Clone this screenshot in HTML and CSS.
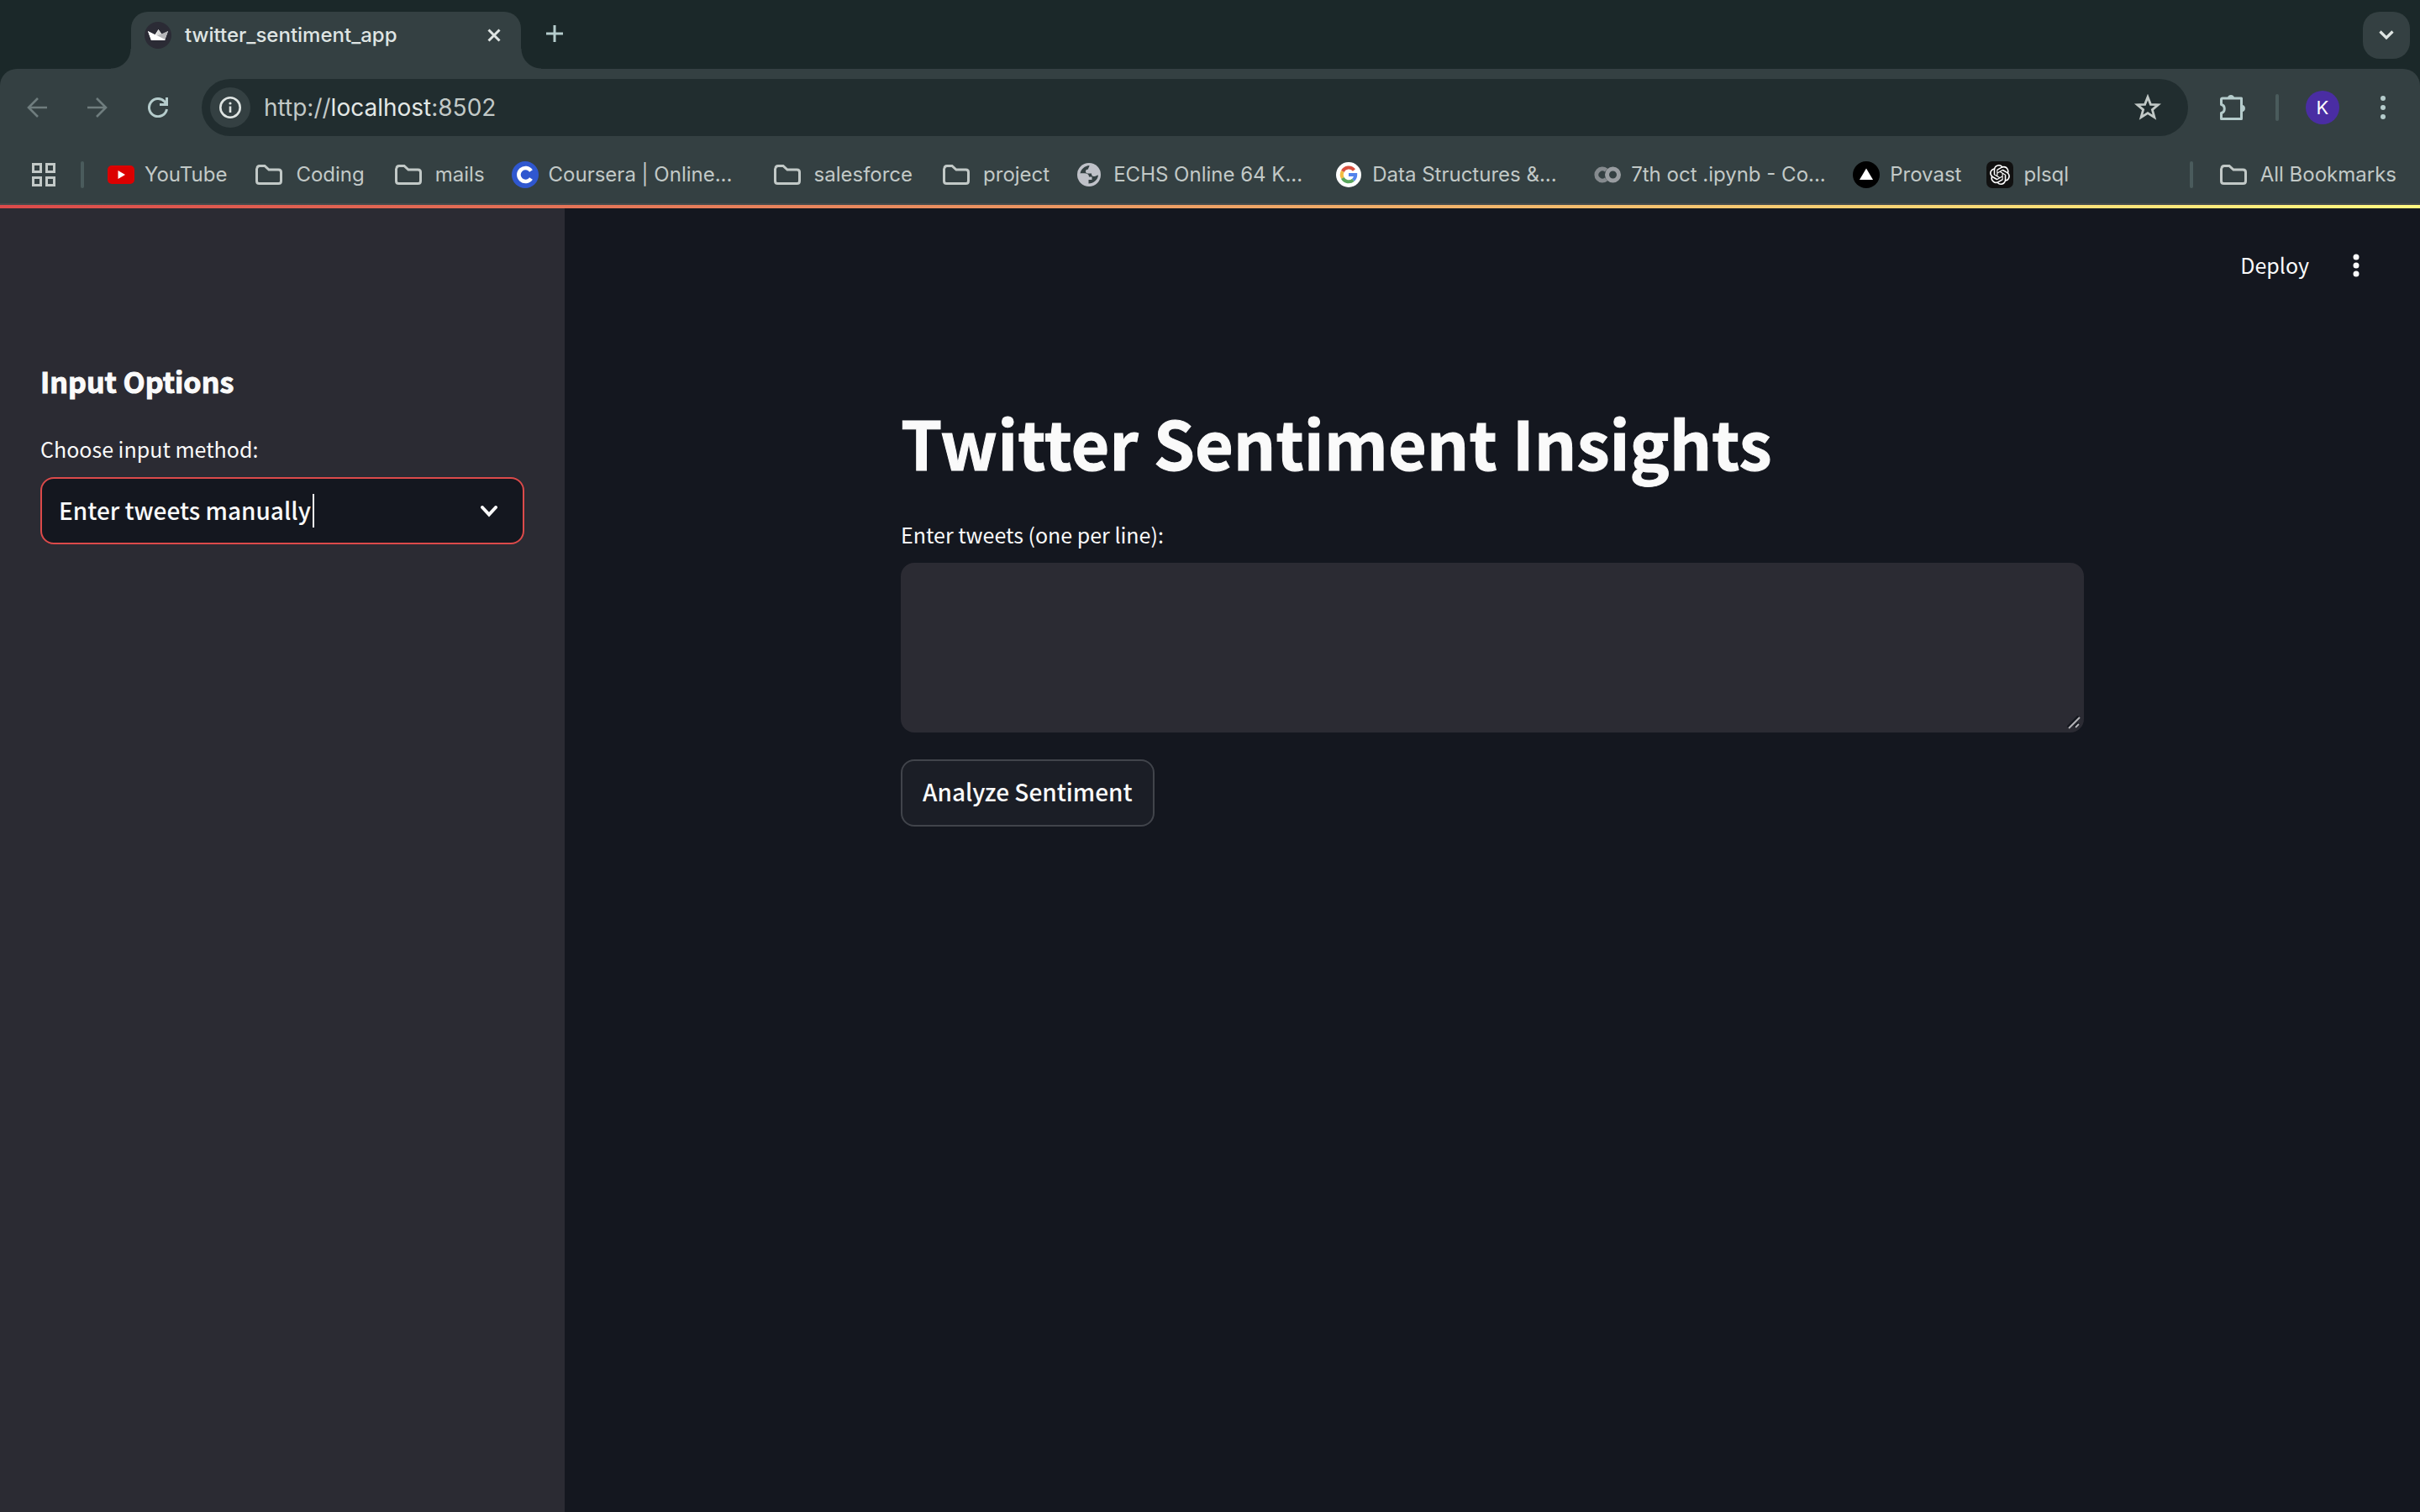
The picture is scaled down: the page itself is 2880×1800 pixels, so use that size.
FILE: index.html
```html
<!DOCTYPE html>
<html lang="en">
<head>
<meta charset="utf-8">
<title>twitter_sentiment_app</title>
<link rel="stylesheet" href="styles.css">
</head>
<body>
<svg class="defs" aria-hidden="true">
  <symbol id="folder" viewBox="0 0 32 24"><path d="M2 4.500Q2 1.500 5 1.500H11L16 6H27.500Q30.500 6 30.500 9V19.500Q30.500 22.500 27.500 22.500H4.500Q1.500 22.500 1.500 19.500V4.500" fill="none" stroke="currentColor" stroke-width="3"/></symbol>
</svg>

<header class="browser">
  <div class="tabstrip">
    <div class="tab">
      <svg class="icon32" viewBox="0 0 32 32"><circle cx="16" cy="16" r="16" fill="#2b2b35"/><path d="M4 11L12 16L16.500 9L21 15.500L28 11L24 22H8Z" fill="#fff"/><path d="M16.500 9L21 15.500L13 17.500Z" fill="#d9d9d9"/><path d="M28 11L24 22L13 17.500Z" fill="#b5b5b8"/><path d="M4 11L24.500 21L24 22H8Z" fill="#fff"/></svg>
      <span class="tab-title">twitter_sentiment_app</span>
      <button class="plain" aria-label="Close tab"><svg width="16" height="16" viewBox="0 0 16 16"><path d="M1.500 1.500L14.500 14.500M14.500 1.500L1.500 14.500" stroke="#dfe5e3" stroke-width="3"/></svg></button>
    </div>
    <button class="plain new-tab" aria-label="New tab"><svg width="20" height="20" viewBox="0 0 20 20"><path d="M10 0V20M0 10H20" stroke="#b5cccc" stroke-width="3"/></svg></button>
    <button class="plain tab-search" aria-label="Search tabs"><svg width="18" height="12" viewBox="0 0 18 12"><path d="M1.500 1.500L9 9L16.500 1.500" fill="none" stroke="#dfe5e3" stroke-width="3.200"/></svg></button>
  </div>

  <div class="toolbar">
    <nav class="nav-buttons">
      <button class="plain dim" aria-label="Back"><svg width="24" height="24" viewBox="0 0 24 24"><path d="M24 12H2M13 1L2 12L13 23" fill="none" stroke="currentColor" stroke-width="2.600"/></svg></button>
      <button class="plain dim" aria-label="Forward"><svg width="24" height="24" viewBox="0 0 24 24"><path d="M0 12H22M11 1L22 12L11 23" fill="none" stroke="currentColor" stroke-width="2.600"/></svg></button>
      <button class="plain teal" aria-label="Reload"><svg width="24" height="24" viewBox="0 0 24 24"><path d="M22.500 14A10.600 10.600 0 1 1 20 5L22 8.500M22.500 0V8.500H14" fill="none" stroke="currentColor" stroke-width="3"/></svg></button>
    </nav>
    <div class="omnibox">
      <button class="plain site-info" aria-label="Site information"><svg width="26" height="26" viewBox="0 0 26 26"><circle cx="13" cy="13" r="11.700" fill="none" stroke="#dfe5e3" stroke-width="2.600"/><path d="M13 11.500V19" stroke="#dfe5e3" stroke-width="2.600"/><circle cx="13" cy="8" r="1.600" fill="#dfe5e3"/></svg></button>
      <span class="url">http://<b>localhost</b>:8502</span>
      <button class="plain star" aria-label="Bookmark this tab"><svg width="32" height="32" viewBox="0 0 32 32"><path d="M16 3.500L19.400 12.300L28.500 12.700L21.400 18.600L23.900 27.700L16 22.600L8.100 27.700L10.600 18.600L3.500 12.700L12.600 12.300Z" fill="none" stroke="currentColor" stroke-width="2.800"/></svg></button>
    </div>
    <div class="toolbar-end">
      <button class="plain teal" aria-label="Extensions"><svg width="34" height="34" viewBox="0 0 34 34"><path d="M5 6H27.500V30.500H3.500V23.500C8.500 22.500 8.500 14.500 3.500 13.500V7.500Q3.500 6 5 6Z" fill="none" stroke="currentColor" stroke-width="3" stroke-linejoin="round"/><path d="M11 5A4.200 4.200 0 0 1 19 5ZM29 14A4.200 4.200 0 0 1 29 22Z" fill="currentColor"/></svg></button>
      <span class="divider"></span>
      <button class="plain avatar">K</button>
      <button class="plain teal" aria-label="Browser menu"><svg width="8" height="28" viewBox="0 0 8 28"><g fill="currentColor"><circle cx="4" cy="3" r="3"/><circle cx="4" cy="14" r="3"/><circle cx="4" cy="25" r="3"/></g></svg></button>
    </div>
  </div>

  <nav class="bookmarks">
    <button class="plain apps" aria-label="Apps"><svg width="28" height="28" viewBox="0 0 28 28"><path d="M1.500 1.500H10.500V10.500H1.500ZM17.500 1.500H26.500V10.500H17.500ZM1.500 17.500H10.500V26.500H1.500ZM17.500 17.500H26.500V26.500H17.500Z" fill="none" stroke="currentColor" stroke-width="3"/></svg></button>
    <span class="divider"></span>
    <ul class="bookmark-list">
      <li><a href="#"><svg class="icon32" viewBox="0 0 32 32"><rect y="5" width="32" height="22" rx="5" fill="#dc0000"/><path d="M12.500 11L21 16L12.500 21Z" fill="#fff"/></svg><span>YouTube</span></a></li>
      <li><a href="#" class="folder"><svg width="32" height="24"><use href="#folder"/></svg><span>Coding</span></a></li>
      <li><a href="#" class="folder"><svg width="32" height="24"><use href="#folder"/></svg><span>mails</span></a></li>
      <li><a href="#" class="long"><svg class="icon32" viewBox="0 0 32 32"><circle cx="16" cy="16" r="16" fill="#2f57cf"/><path d="M23 11.500A8 8 0 1 0 23 20.500" fill="none" stroke="#fff" stroke-width="4.600"/></svg><span>Coursera | Online...</span></a></li>
      <li><a href="#" class="folder"><svg width="32" height="24"><use href="#folder"/></svg><span>salesforce</span></a></li>
      <li><a href="#" class="folder"><svg width="32" height="24"><use href="#folder"/></svg><span>project</span></a></li>
      <li><a href="#" class="long"><svg class="icon32" viewBox="0 0 32 32"><circle cx="15" cy="16" r="14" fill="#bfc1c8"/><path d="M15.500 5C10 5.500 5.500 9 4.500 14.500H11C13 14.500 15 16 15 18.500H18.500V22H14.500V26.500C20.500 26.500 25.500 22 26 16.500C24 16.500 23.500 18 21 18C18.500 18 18 16.500 18 14.500H13.500C12 14.500 11 13.500 11 12C11 10.500 12 9.500 14 9.500C14 7.500 15.500 7 15.500 5Z" fill="#344042"/><path d="M4.500 14.500H9C12 14.500 14 16 14 18.500H9Z" fill="#bfc1c8"/></svg><span>ECHS Online 64 K...</span></a></li>
      <li><a href="#" class="long"><svg class="icon32" viewBox="0 0 32 32"><circle cx="16" cy="16" r="15" fill="#fff"/><g fill="none" stroke-width="4"><path d="M22.500 10.500A8.200 8.200 0 0 0 8.800 12" stroke="#d8503f"/><path d="M8.800 12A8.200 8.200 0 0 0 8.800 20" stroke="#f2bd42"/><path d="M8.800 20A8.200 8.200 0 0 0 21.500 22.200" stroke="#58a55c"/><path d="M21.500 22.200A8.200 8.200 0 0 0 24.200 16H16" stroke="#5383ec"/></g></svg><span>Data Structures &amp;...</span></a></li>
      <li><a href="#" class="long"><svg class="icon32" viewBox="0 0 32 32"><g fill="none" stroke-width="5"><path d="M14.500 10.700A7 7 0 1 0 14.500 21.300" stroke="#858a8e"/><circle cx="22.500" cy="16" r="7" stroke="#999da1"/></g></svg><span>7th oct .ipynb - Co...</span></a></li>
      <li><a href="#"><svg class="icon32" viewBox="0 0 32 32"><circle cx="16" cy="16" r="16"/><path d="M16 8.500L24 22H8Z" fill="#fff"/></svg><span>Provast</span></a></li>
      <li><a href="#"><svg class="icon32" viewBox="0 0 32 32"><rect width="32" height="32" rx="7" fill="#111"/><svg x="4" y="4" width="24" height="24" viewBox="0 0 24 24"><path fill="#fff" d="M22.282 9.821a5.985 5.985 0 0 0-.516-4.910 6.046 6.046 0 0 0-6.510-2.900A6.065 6.065 0 0 0 4.981 4.182a5.985 5.985 0 0 0-3.998 2.900 6.046 6.046 0 0 0 .743 7.097 5.980 5.980 0 0 0 .510 4.911 6.051 6.051 0 0 0 6.515 2.900A5.985 5.985 0 0 0 13.260 24a6.056 6.056 0 0 0 5.772-4.206 5.990 5.990 0 0 0 3.997-2.900 6.056 6.056 0 0 0-.747-7.073zM13.260 22.430a4.476 4.476 0 0 1-2.876-1.040l.141-.081 4.779-2.758a.795.795 0 0 0 .392-.681v-6.737l2.020 1.168a.071.071 0 0 1 .038.052v5.583a4.504 4.504 0 0 1-4.494 4.494zM3.600 18.304a4.470 4.470 0 0 1-.535-3.014l.142.085 4.783 2.759a.771.771 0 0 0 .780 0l5.843-3.369v2.332a.080.080 0 0 1-.033.062L9.740 19.950a4.500 4.500 0 0 1-6.140-1.646zM2.340 7.896a4.485 4.485 0 0 1 2.366-1.973V11.600a.766.766 0 0 0 .388.677l5.815 3.355-2.020 1.168a.076.076 0 0 1-.071 0l-4.830-2.786A4.504 4.504 0 0 1 2.340 7.872zm16.597 3.855l-5.833-3.387L15.119 7.200a.076.076 0 0 1 .071 0l4.830 2.791a4.494 4.494 0 0 1-.676 8.105v-5.678a.790.790 0 0 0-.407-.667zm2.010-3.023l-.141-.085-4.774-2.782a.776.776 0 0 0-.785 0L9.409 9.230V6.897a.066.066 0 0 1 .028-.061l4.830-2.787a4.500 4.500 0 0 1 6.680 4.660zm-12.640 4.135l-2.020-1.164a.080.080 0 0 1-.038-.057V6.075a4.500 4.500 0 0 1 7.375-3.453l-.142.080L8.704 5.460a.795.795 0 0 0-.393.681zm1.097-2.365l2.602-1.500 2.607 1.500v2.999l-2.597 1.500-2.607-1.500z"/></svg></svg><span>plsql</span></a></li>
    </ul>
    <span class="divider last"></span>
    <a href="#" class="folder all"><svg width="32" height="24"><use href="#folder"/></svg><span>All Bookmarks</span></a>
  </nav>
</header>

<div class="app">
  <aside class="sidebar">
    <h2>Input Options</h2>
    <label for="method">Choose input method:</label>
    <div class="select-box">
      <select id="method"><option>Enter tweets manually</option></select>
      <span class="caret"></span>
      <svg class="chevron" width="20" height="14" viewBox="0 0 20 14"><path d="M2 2L10 10.500L18 2" fill="none" stroke="#fafafa" stroke-width="4" stroke-linecap="round"/></svg>
    </div>
  </aside>
  <main class="main">
    <div class="app-header">
      <button class="plain deploy">Deploy</button>
      <button class="plain" aria-label="Main menu"><svg width="8" height="28" viewBox="0 0 8 28"><g fill="#fafafa"><circle cx="4" cy="4" r="3.500"/><circle cx="4" cy="14" r="3.500"/><circle cx="4" cy="24" r="3.500"/></g></svg></button>
    </div>
    <div class="block">
      <h1>Twitter Sentiment Insights</h1>
      <label for="tweets">Enter tweets (one per line):</label>
      <div class="area-box">
        <textarea id="tweets"></textarea>
        <svg class="grip" width="16" height="16" viewBox="0 0 16 16"><path d="M1 14L14 1M9 14L14 9" stroke="#15181f" stroke-width="4"/><path d="M2 15L15 2M10 14L14 10" stroke="#b4b4b8" stroke-width="2"/></svg>
      </div>
      <button class="analyze">Analyze Sentiment</button>
    </div>
  </main>
</div>
</body>
</html>
```
FILE: styles.css
```css
* { box-sizing: border-box; }

:root {
  --strip: #1b2829;
  --toolbar: #344042;
  --panel: #2b2b33;
  --page: #14171f;
  --text: #fafafa;
  --chrome-font: Inter, "Liberation Sans", sans-serif;
  --app-font: "Noto Sans CJK SC", "Noto Sans", sans-serif;
}

body {
  margin: 0;
  min-height: 100vh;
  display: flex;
  flex-direction: column;
  background: var(--page);
  color: var(--text);
  font-family: var(--app-font);
}

.defs { position: absolute; width: 0; height: 0; }
svg { display: block; flex: none; }
.icon32 { width: 32px; height: 32px; }

.plain {
  display: flex;
  align-items: center;
  justify-content: center;
  padding: 0;
  border: 0;
  background: none;
  color: inherit;
  font: inherit;
}

/* Browser window */
.browser {
  background: var(--strip);
  border-bottom: 2px solid #454a4c;
  color: #c2c9c7;
  font: 400 24px/32px var(--chrome-font);
}

.tabstrip {
  display: flex;
  padding: 14px 12px 0 156px;
}

.tab {
  position: relative;
  display: flex;
  align-items: center;
  gap: 16px;
  width: 464px;
  height: 68px;
  padding: 0 24px 12px 16px;
  border-radius: 20px 20px 0 0;
  background: var(--toolbar);
  color: #dfe5e3;
  font-weight: 500;
}

.tab::before,
.tab::after {
  content: "";
  position: absolute;
  bottom: 0;
  width: 24px;
  height: 24px;
}

.tab::before {
  right: 100%;
  background: radial-gradient(circle at 0 0, transparent 23px, var(--toolbar) 24px);
}

.tab::after {
  left: 100%;
  background: radial-gradient(circle at 100% 0, transparent 23px, var(--toolbar) 24px);
}

.tab-title { flex: 1; }

.new-tab { margin-left: 30px; height: 52px; }

.tab-search {
  width: 56px;
  height: 56px;
  margin-left: auto;
  border-radius: 20px;
  background: var(--toolbar);
}

.toolbar {
  display: flex;
  align-items: center;
  padding: 12px 40px 12px 32px;
  border-radius: 20px 20px 0 0;
  background: var(--toolbar);
}

.nav-buttons { display: flex; gap: 48px; margin-right: 40px; }
.dim { color: #6f7d7e; }
.teal { color: #b5cccc; }

.omnibox {
  flex: 1;
  display: flex;
  align-items: center;
  gap: 16px;
  height: 68px;
  padding: 0 32px 0 10px;
  border-radius: 34px;
  background: #212d2f;
}

.site-info {
  width: 48px;
  height: 48px;
  border-radius: 50%;
  background: var(--toolbar);
}

.url { flex: 1; font-size: 28px; }
.url b { font-weight: 400; color: #e3e8e6; }

.toolbar-end { display: flex; align-items: center; margin-left: 36px; }
.toolbar-end .divider { margin: 0 32px 0 34px; }

.divider {
  flex: none;
  width: 4px;
  height: 32px;
  border-radius: 2px;
  background: #4a5b5c;
}

.avatar {
  width: 40px;
  height: 40px;
  margin-right: 48px;
  border-radius: 50%;
  background: #4a2da3;
  color: #fff;
  font-size: 22px;
}

.bookmarks {
  display: flex;
  align-items: center;
  height: 68px;
  padding: 0 28px 0 38px;
  background: var(--toolbar);
}

.apps { margin-right: 30px; }

.bookmark-list {
  flex: 1;
  display: flex;
  gap: 30px;
  margin: 0 0 0 28px;
  padding: 0;
  list-style: none;
}

.bookmarks a {
  display: flex;
  align-items: center;
  gap: 12px;
  color: inherit;
  text-decoration: none;
  white-space: nowrap;
}

.bookmarks .folder { gap: 16px; padding: 0 2px 0 4px; }
.bookmarks .long { width: 278px; }
.bookmarks .all { padding: 0; }
.divider.last { margin-right: 32px; }

/* App */
.app {
  position: relative;
  flex: 1;
  display: flex;
}

.app::before {
  content: "";
  position: absolute;
  inset: 0 0 auto;
  height: 4px;
  background: linear-gradient(90deg, #dc4a4a, #fff980);
}

.sidebar {
  flex: none;
  width: 672px;
  padding: 186px 48px 48px;
  background: var(--panel);
}

h1, h2 {
  margin: 0;
  font-weight: 700;
  -webkit-text-stroke: 1px currentColor;
}

h2 { font-size: 34px; line-height: 48px; }

label {
  display: block;
  font-size: 25px;
  line-height: 40px;
}

.sidebar label { margin: 36px 0 14px; }

.select-box { position: relative; }

select {
  display: block;
  width: 100%;
  height: 80px;
  padding: 0 64px 2px 20px;
  border: 2px solid #dc4a4a;
  border-radius: 16px;
  appearance: none;
  background: var(--page);
  color: var(--text);
  font: 500 28px/40px var(--app-font);
}

.caret {
  position: absolute;
  left: 324px;
  top: 20px;
  width: 2px;
  height: 40px;
  background: var(--text);
}

.chevron { position: absolute; right: 32px; top: 34px; }

.main { flex: 1; }

.app-header {
  display: flex;
  align-items: center;
  justify-content: flex-end;
  gap: 52px;
  height: 120px;
  padding: 24px 72px 0 0;
}

.deploy { padding-bottom: 2px; font-size: 25px; line-height: 40px; }

.block {
  max-width: 1408px;
  margin: 0 auto;
  padding: 114px 0 96px;
}

h1 { font-size: 79px; line-height: 96px; }
.block label { margin: 42px 0 14px; }

.area-box { position: relative; }

textarea {
  display: block;
  width: 100%;
  height: 202px;
  padding: 24px;
  border: 0;
  border-radius: 16px;
  background: var(--panel);
  color: var(--text);
  font: 500 28px/40px var(--app-font);
  resize: none;
}

.grip { position: absolute; right: 4px; bottom: 4px; }

.analyze {
  display: block;
  height: 80px;
  margin-top: 32px;
  padding: 0 24px 4px;
  border: 2px solid #41444b;
  border-radius: 16px;
  background: #1b1e26;
  color: var(--text);
  font: 500 28px/40px var(--app-font);
}
```
